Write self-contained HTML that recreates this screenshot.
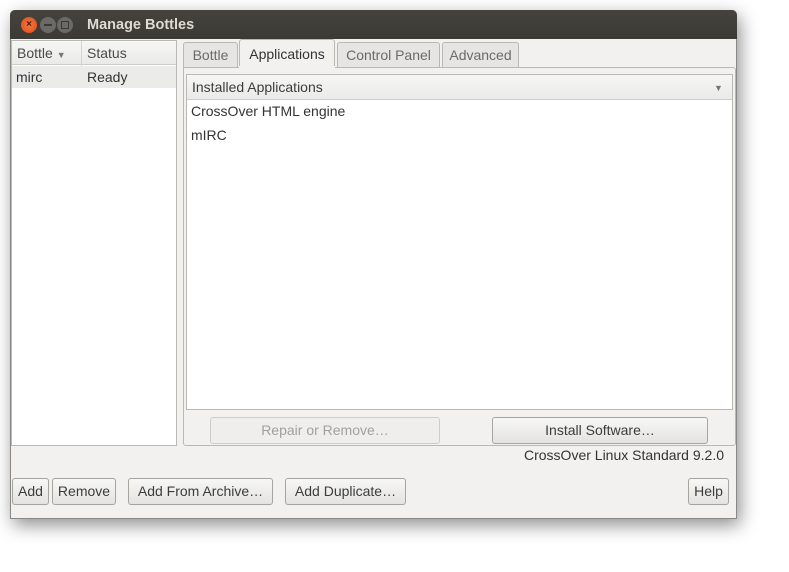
<!DOCTYPE html>
<html><head><meta charset="utf-8"><style>
*{box-sizing:border-box;margin:0;padding:0}
body{width:789px;height:572px;background:#fff;font-family:"Liberation Sans","DejaVu Sans",sans-serif;font-size:14px;color:#3c3c3c;position:relative;overflow:hidden}
.a{position:absolute}
.win{left:10px;top:10px;width:727px;height:509px;background:#f2f1f0;border:1px solid #8a8884;box-shadow:3px 6px 18px rgba(0,0,0,.45);border-radius:5px 5px 0 0}
.title{left:10px;top:10px;width:727px;height:29px;background:linear-gradient(#45433e,#3b3a35);border-radius:5px 5px 0 0;color:#dfdbd2;font-weight:bold;font-size:14.5px}
.btn{border:1px solid #a6a49f;border-radius:3px;background:linear-gradient(#f7f7f6,#e4e3e1);text-align:center;line-height:24px;color:#3c3c3c;font-size:14px}
.tab{border:1px solid #bab8b3;border-bottom:none;border-radius:3px 3px 0 0;background:#e6e5e3;text-align:center;line-height:24px;color:#6a6a6a}
</style></head><body>
<div class="a win"></div>
<div class="a title">
 <div class="a" style="left:11px;top:7px;width:16px;height:16px;border-radius:50%;background:radial-gradient(#f47a45,#db4a14);color:#4a1a08;font-size:10px;line-height:16px;text-align:center;font-weight:bold">×</div>
 <div class="a" style="left:30px;top:7px;width:16px;height:16px;border-radius:50%;background:#6b6a66;"><div class="a" style="left:4px;top:7px;width:8px;height:2px;background:#3b3a36"></div></div>
 <div class="a" style="left:47px;top:7px;width:16px;height:16px;border-radius:50%;background:#6b6a66;"><div class="a" style="left:4px;top:4px;width:8px;height:8px;border:1.5px solid #3b3a36"></div></div>
 <div class="a" style="left:77px;top:7px">Manage Bottles</div>
</div>
<div class="a" style="left:11px;top:40px;width:166px;height:406px;background:#fff;border:1px solid #bab8b3"></div>
<div class="a" style="left:12px;top:41px;width:164px;height:24px;background:linear-gradient(#f6f6f5,#eaeae8);border-bottom:1px solid #cfcdc9"></div>
<div class="a" style="left:81px;top:41px;width:1px;height:47px;background:#d6d4d0"></div>
<div class="a" style="left:17px;top:45px;color:#4a4a4a">Bottle <span style="font-size:9px;color:#777">▼</span></div>
<div class="a" style="left:87px;top:45px;color:#4a4a4a">Status</div>
<div class="a" style="left:12px;top:66px;width:164px;height:22px;background:#ebebea"></div>
<div class="a" style="left:16px;top:69px;color:#333">mirc</div>
<div class="a" style="left:87px;top:69px;color:#333">Ready</div>
<div class="a tab" style="left:183px;top:42px;width:55px;height:25px">Bottle</div>
<div class="a tab" style="left:239px;top:39px;width:96px;height:29px;background:#f2f1f0;color:#333;line-height:28px">Applications</div>
<div class="a tab" style="left:337px;top:42px;width:103px;height:25px">Control Panel</div>
<div class="a tab" style="left:442px;top:42px;width:77px;height:25px">Advanced</div>
<div class="a" style="left:183px;top:67px;width:553px;height:379px;border:1px solid #bab8b3;border-radius:0 3px 3px 3px"></div>
<div class="a" style="left:239px;top:66px;width:96px;height:3px;background:#f2f1f0"></div>
<div class="a" style="left:186px;top:74px;width:547px;height:336px;background:#fff;border:1px solid #bab8b3"></div>
<div class="a" style="left:187px;top:75px;width:545px;height:25px;background:linear-gradient(#f6f6f5,#eaeae8);border-bottom:1px solid #cfcdc9"></div>
<div class="a" style="left:192px;top:79px;color:#3c3c3c">Installed Applications</div>
<div class="a" style="left:714px;top:83px;font-size:9px;color:#777">▼</div>
<div class="a" style="left:191px;top:103px;color:#333">CrossOver HTML engine</div>
<div class="a" style="left:191px;top:127px;color:#333">mIRC</div>
<div class="a btn" style="left:210px;top:417px;width:230px;height:27px;color:#a0a0a0;border-color:#cfcdc9;background:#efeeed">Repair or Remove…</div>
<div class="a btn" style="left:492px;top:417px;width:216px;height:27px">Install Software…</div>
<div class="a" style="left:524px;top:447px;color:#333">CrossOver Linux Standard 9.2.0</div>
<div class="a btn" style="left:12px;top:478px;width:37px;height:27px">Add</div>
<div class="a btn" style="left:52px;top:478px;width:64px;height:27px">Remove</div>
<div class="a btn" style="left:128px;top:478px;width:145px;height:27px">Add From Archive…</div>
<div class="a btn" style="left:285px;top:478px;width:121px;height:27px">Add Duplicate…</div>
<div class="a btn" style="left:688px;top:478px;width:41px;height:27px">Help</div>
</body></html>
